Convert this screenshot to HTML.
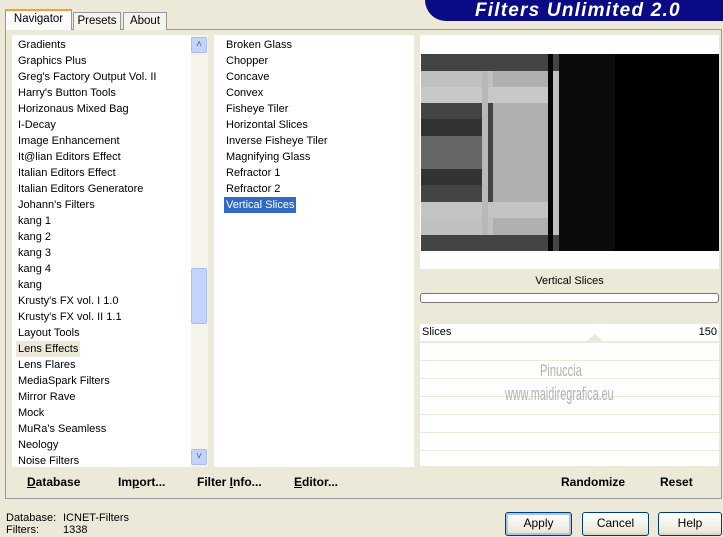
<!DOCTYPE html>
<html><head><meta charset="utf-8"><style>
*{margin:0;padding:0;box-sizing:border-box}
body{width:723px;height:537px;background:#ece9d8;font-family:"Liberation Sans",sans-serif;font-size:11px;color:#000;position:relative;overflow:hidden}
.a{position:absolute}
.banner{left:425px;top:0;width:298px;height:21px;background:#0a0a84;border-bottom-left-radius:22px;color:#fff;font-weight:bold;font-style:italic;font-size:19px;line-height:21px;padding-left:50px;letter-spacing:1.2px}
.tab{top:12px;height:18px;border:1px solid #919b9c;border-bottom:none;background:#f4f3ee;text-align:center;line-height:17px;font-size:11.5px}
.panel{left:5px;top:29px;width:717px;height:470px;border:1px solid #919b9c;background:#ece9d8}
.list{background:#fff}
.item{position:absolute;left:6px;height:16px;line-height:16px;white-space:nowrap}
.sb{background:#f5f4ea}
.btn{border:1px solid #003c74;border-radius:3px;background:linear-gradient(#fff,#ece9d8 85%,#d6d0c5);text-align:center;line-height:21px;font-size:12px}
.bb{font-weight:bold;font-size:12px}
.row{left:420px;width:299px;height:17px;background:#fff}
</style></head><body>
<div class="a banner">Filters Unlimited 2.0</div>
<div class="a panel"></div>
<div class="a tab" style="left:73px;width:48px">Presets</div>
<div class="a tab" style="left:123px;width:44px">About</div>
<div class="a tab" style="left:5px;top:9px;width:67px;height:21px;background:#fcfcfe;border-top:2px solid #f5a030;line-height:17px">Navigator</div>

<div class="a list" style="left:12px;top:35px;width:196px;height:432px">
<div class="item" style="top:2px">Gradients</div>
<div class="item" style="top:18px">Graphics Plus</div>
<div class="item" style="top:34px">Greg's Factory Output Vol. II</div>
<div class="item" style="top:50px">Harry's Button Tools</div>
<div class="item" style="top:66px">Horizonaus Mixed Bag</div>
<div class="item" style="top:82px">I-Decay</div>
<div class="item" style="top:98px">Image Enhancement</div>
<div class="item" style="top:114px">It@lian Editors Effect</div>
<div class="item" style="top:130px">Italian Editors Effect</div>
<div class="item" style="top:146px">Italian Editors Generatore</div>
<div class="item" style="top:162px">Johann's Filters</div>
<div class="item" style="top:178px">kang 1</div>
<div class="item" style="top:194px">kang 2</div>
<div class="item" style="top:210px">kang 3</div>
<div class="item" style="top:226px">kang 4</div>
<div class="item" style="top:242px">kang</div>
<div class="item" style="top:258px">Krusty's FX vol. I 1.0</div>
<div class="item" style="top:274px">Krusty's FX vol. II 1.1</div>
<div class="item" style="top:290px">Layout Tools</div>
<div class="item" style="top:306px;background:#ece9d8;padding:0 2px;left:4px">Lens Effects</div>
<div class="item" style="top:322px">Lens Flares</div>
<div class="item" style="top:338px">MediaSpark Filters</div>
<div class="item" style="top:354px">Mirror Rave</div>
<div class="item" style="top:370px">Mock</div>
<div class="item" style="top:386px">MuRa's Seamless</div>
<div class="item" style="top:402px">Neology</div>
<div class="item" style="top:418px">Noise Filters</div>
</div>
<div class="a sb" style="left:191px;top:35px;width:17px;height:432px"></div>
<div class="a" style="left:191px;top:37px;width:16px;height:16px;background:#c4d3fb;border:1px solid #a9bdf0;border-radius:2px;text-align:center;line-height:14px;font-size:10px;color:#4d6185">&#x2C4;</div>
<div class="a" style="left:191px;top:268px;width:16px;height:56px;background:#c4d3fb;border:1px solid #a9bdf0;border-radius:2px"></div>
<div class="a" style="left:191px;top:449px;width:16px;height:16px;background:#c4d3fb;border:1px solid #a9bdf0;border-radius:2px;text-align:center;line-height:14px;font-size:10px;color:#4d6185">&#x2C5;</div>

<div class="a list" style="left:214px;top:35px;width:200px;height:432px">
<div class="item" style="top:2px;left:12px">Broken Glass</div>
<div class="item" style="top:18px;left:12px">Chopper</div>
<div class="item" style="top:34px;left:12px">Concave</div>
<div class="item" style="top:50px;left:12px">Convex</div>
<div class="item" style="top:66px;left:12px">Fisheye Tiler</div>
<div class="item" style="top:82px;left:12px">Horizontal Slices</div>
<div class="item" style="top:98px;left:12px">Inverse Fisheye Tiler</div>
<div class="item" style="top:114px;left:12px">Magnifying Glass</div>
<div class="item" style="top:130px;left:12px">Refractor 1</div>
<div class="item" style="top:146px;left:12px">Refractor 2</div>
<div class="item" style="top:162px;left:10px;padding:0 2px;background:#316ac5;color:#fff">Vertical Slices</div>
</div>

<div class="a list" style="left:420px;top:35px;width:299px;height:234px"></div>
<svg class="a" style="left:421px;top:54px" width="298" height="197">
<rect width="298" height="197" fill="#000"/>
<rect x="0" y="0" width="138" height="17" fill="#444"/>
<rect x="0" y="17" width="138" height="16" fill="#c0c0c0"/>
<rect x="0" y="33" width="138" height="16" fill="#c8c8c8"/>
<rect x="0" y="49" width="138" height="16" fill="#444"/>
<rect x="0" y="65" width="138" height="17" fill="#333"/>
<rect x="0" y="82" width="138" height="33" fill="#666"/>
<rect x="0" y="115" width="138" height="16" fill="#333"/>
<rect x="0" y="131" width="138" height="17" fill="#444"/>
<rect x="0" y="148" width="138" height="16" fill="#c4c4c4"/>
<rect x="0" y="164" width="138" height="17" fill="#c0c0c0"/>
<rect x="0" y="181" width="138" height="16" fill="#444"/>
<rect x="61" y="17" width="6" height="164" fill="#b8b8b8"/>
<rect x="67" y="49" width="5" height="82" fill="#444"/>
<rect x="72" y="17" width="55" height="164" fill="#b0b0b0"/>
<rect x="72" y="33" width="55" height="16" fill="#c8c8c8"/>
<rect x="72" y="148" width="55" height="16" fill="#c4c4c4"/>
<rect x="127" y="0" width="5" height="197" fill="#050505"/>
<rect x="132" y="17" width="6" height="164" fill="#c0c0c0"/>
<rect x="138" y="0" width="56" height="197" fill="#0b0b0b"/>
</svg>
<div class="a" style="left:420px;top:275px;width:299px;text-align:center">Vertical Slices</div>
<div class="a" style="left:420px;top:293px;width:299px;height:10px;border:1px solid #777;border-radius:3px;background:#fff"></div>
<div class="a row" style="top:324px"><span style="position:absolute;left:2px;top:2px">Slices</span><span style="position:absolute;right:2px;top:2px">150</span></div>
<div class="a" style="left:586px;top:334px;width:0;height:0;border-left:9px solid transparent;border-right:9px solid transparent;border-bottom:8px solid #ece9d8"></div>
<div class="a row" style="top:343px"></div>
<div class="a row" style="top:361px"></div>
<div class="a row" style="top:379px"></div>
<div class="a row" style="top:397px"></div>
<div class="a row" style="top:415px"></div>
<div class="a row" style="top:433px"></div>
<div class="a row" style="top:451px;height:15px"></div>
<div class="a" style="left:540px;top:361px;color:#b0b0b0;font-size:17px;transform:scaleX(.65);transform-origin:left">Pinuccia</div>
<div class="a" style="left:505px;top:384px;color:#b0b0b0;font-size:18px;transform:scaleX(.6);transform-origin:left">www.maidiregrafica.eu</div>

<div class="a bb" style="left:27px;top:475px"><u>D</u>atabase</div>
<div class="a bb" style="left:118px;top:475px">Im<u>p</u>ort...</div>
<div class="a bb" style="left:197px;top:475px">Filter <u>I</u>nfo...</div>
<div class="a bb" style="left:294px;top:475px"><u>E</u>ditor...</div>
<div class="a bb" style="left:561px;top:475px">Randomize</div>
<div class="a bb" style="left:660px;top:475px">Reset</div>

<div class="a" style="left:6px;top:512px">Database:</div>
<div class="a" style="left:63px;top:512px">ICNET-Filters</div>
<div class="a" style="left:6px;top:524px">Filters:</div>
<div class="a" style="left:63px;top:524px">1338</div>

<div class="a btn" style="left:505px;top:512px;width:67px;height:24px;box-shadow:inset 0 0 0 2px #a8c4f0">Apply</div>
<div class="a btn" style="left:582px;top:512px;width:67px;height:24px">Cancel</div>
<div class="a btn" style="left:658px;top:512px;width:64px;height:24px">Help</div>
</body></html>
